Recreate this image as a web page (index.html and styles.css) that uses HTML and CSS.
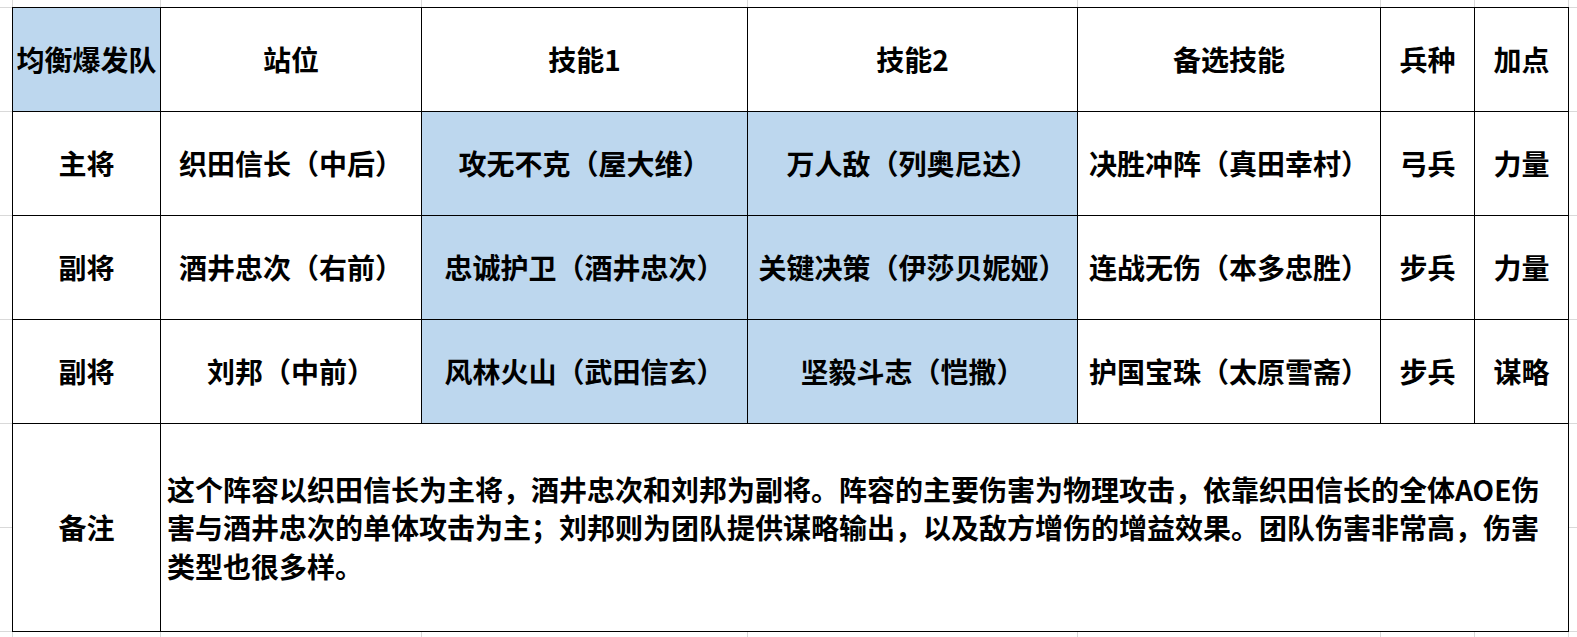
FILE: index.html
```html
<!DOCTYPE html>
<html lang="zh-CN">
<head>
<meta charset="utf-8">
<title>均衡爆发队</title>
<link rel="stylesheet" href="styles.css">
</head>
<body>
<div class="sheet">
  <div class="grid">
    <div class="cell blue">均衡爆发队</div>
    <div class="cell">站位</div>
    <div class="cell">技能1</div>
    <div class="cell">技能2</div>
    <div class="cell">备选技能</div>
    <div class="cell">兵种</div>
    <div class="cell">加点</div>

    <div class="cell">主将</div>
    <div class="cell">织田信长（中后）</div>
    <div class="cell blue">攻无不克（屋大维）</div>
    <div class="cell blue">万人敌（列奥尼达）</div>
    <div class="cell">决胜冲阵（真田幸村）</div>
    <div class="cell">弓兵</div>
    <div class="cell">力量</div>

    <div class="cell">副将</div>
    <div class="cell">酒井忠次（右前）</div>
    <div class="cell blue">忠诚护卫（酒井忠次）</div>
    <div class="cell blue">关键决策（伊莎贝妮娅）</div>
    <div class="cell">连战无伤（本多忠胜）</div>
    <div class="cell">步兵</div>
    <div class="cell">力量</div>

    <div class="cell">副将</div>
    <div class="cell">刘邦（中前）</div>
    <div class="cell blue">风林火山（武田信玄）</div>
    <div class="cell blue">坚毅斗志（恺撒）</div>
    <div class="cell">护国宝珠（太原雪斋）</div>
    <div class="cell">步兵</div>
    <div class="cell">谋略</div>

    <div class="cell">备注</div>
    <div class="cell note"><p class="note-text">这个阵容以织田信长为主将，酒井忠次和刘邦为副将。阵容的主要伤害为物理攻击，依靠织田信长的全体AOE伤害与酒井忠次的单体攻击为主；刘邦则为团队提供谋略输出，以及敌方增伤的增益效果。团队伤害非常高，伤害类型也很多样。</p></div>
  </div>
</div>
</body>
</html>
```

FILE: styles.css
```css
html, body {
  margin: 0;
  padding: 0;
}

body {
  width: 1577px;
  height: 637px;
  overflow: hidden;
  background-color: #ffffff;
  --gl: #d9d9d9;
  background-image:
    linear-gradient(var(--gl), var(--gl)),
    linear-gradient(var(--gl), var(--gl)),
    linear-gradient(var(--gl), var(--gl)),
    linear-gradient(var(--gl), var(--gl)),
    linear-gradient(var(--gl), var(--gl)),
    linear-gradient(var(--gl), var(--gl)),
    linear-gradient(var(--gl), var(--gl)),
    linear-gradient(var(--gl), var(--gl)),
    linear-gradient(var(--gl), var(--gl)),
    linear-gradient(var(--gl), var(--gl)),
    linear-gradient(var(--gl), var(--gl)),
    linear-gradient(var(--gl), var(--gl)),
    linear-gradient(var(--gl), var(--gl)),
    linear-gradient(var(--gl), var(--gl)),
    linear-gradient(var(--gl), var(--gl));
  background-repeat: no-repeat;
  background-size:
    1px 100%, 1px 100%, 1px 100%, 1px 100%, 1px 100%, 1px 100%, 1px 100%, 1px 100%,
    100% 1px, 100% 1px, 100% 1px, 100% 1px, 100% 1px, 100% 1px, 100% 1px;
  background-position:
    12px 0, 160px 0, 421px 0, 747px 0, 1077px 0, 1380px 0, 1474px 0, 1568px 0,
    0 7px, 0 111px, 0 215px, 0 319px, 0 423px, 0 527px, 0 631px;
  font-family: "Noto Sans CJK SC", "Microsoft YaHei", sans-serif;
  font-weight: 700;
  color: #000000;
}

.sheet {
  padding: 7px 0 0 12px;
}

.grid {
  display: grid;
  width: max-content;
  grid-template-columns: 147px 260px 325px 329px 302px 93px 93px;
  grid-template-rows: 103px 103px 103px 103px 207px;
  gap: 1px;
  padding: 1px;
  background: #000000;
}

.cell {
  background: #ffffff;
  display: flex;
  align-items: center;
  justify-content: center;
  font-size: 28px;
  line-height: 1.2;
  white-space: nowrap;
  overflow: visible;
}

.blue {
  background: #bdd7ee;
}

.note {
  grid-column: 2 / span 6;
  justify-content: flex-start;
  white-space: normal;
  padding: 0 4px 0 6px;
}

.note-text {
  margin: 0;
  width: 1390px;
  font-size: 28px;
  line-height: 38.5px;
  text-align: left;
}
```
